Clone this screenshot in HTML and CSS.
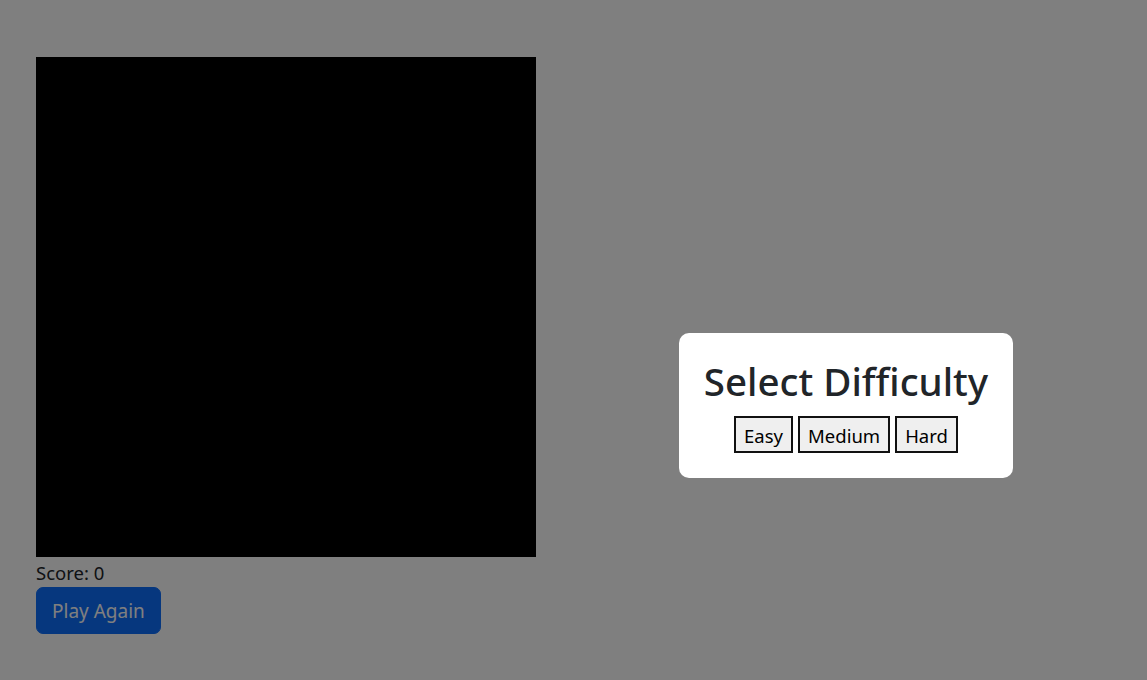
FILE: index.html
```html
<!DOCTYPE html>
<html lang="en">
<head>
<meta charset="utf-8">
<title>Snake</title>
<link rel="stylesheet" href="styles.css">
</head>
<body>
<main class="game">
  <div class="board"></div>
  <div class="score">Score: 0</div>
  <button class="btn-play" type="button">Play Again</button>
</main>
<div class="overlay">
  <div class="modal">
    <h1 class="modal-title">Select Difficulty</h1>
    <div class="choices">
      <button class="choice" type="button">Easy</button>
      <button class="choice" type="button">Medium</button>
      <button class="choice" type="button">Hard</button>
    </div>
  </div>
</div>
</body>
</html>
```

FILE: styles.css
```css
* { box-sizing: border-box; }
html, body { margin: 0; height: 100%; }
body {
  background: #ffffff;
  color: #212529;
  font-family: "Noto Sans", "Open Sans", sans-serif;
  font-size: 16px;
}
.game {
  padding: 57px 0 0 36px;
  display: flex;
  flex-direction: column;
  align-items: flex-start;
}
.board {
  width: 500px;
  height: 500px;
  background: #000;
}
.score {
  height: 30px;
  padding-top: 4px;
  font-size: 18.5px;
  line-height: 24px;
}
.btn-play {
  height: 47px;
  padding: 0 15px;
  border: 1px solid #0d6efd;
  border-radius: 7px;
  background: #0d6efd;
  color: #fff;
  font-family: inherit;
  font-size: 19px;
  line-height: 47px;
}
.overlay {
  position: fixed;
  inset: 0;
  background: rgba(0, 0, 0, 0.5);
}
.modal {
  position: absolute;
  left: 679px;
  top: 333px;
  width: 334px;
  height: 145px;
  padding: 25px 0 25px;
  background: #fff;
  border-radius: 10px;
  display: flex;
  flex-direction: column;
  align-items: center;
}
.modal-title {
  margin: 0;
  font-size: 38.5px;
  font-weight: 500;
  line-height: 47px;
  color: #212529;
}
.choices {
  margin-top: 11px;
  display: flex;
  gap: 5px;
}
.choice {
  height: 37px;
  padding: 0 8px;
  border: 2px solid #111;
  background: #efefef;
  color: #000;
  font-family: inherit;
  font-size: 18.5px;
  line-height: 35px;
}
```
